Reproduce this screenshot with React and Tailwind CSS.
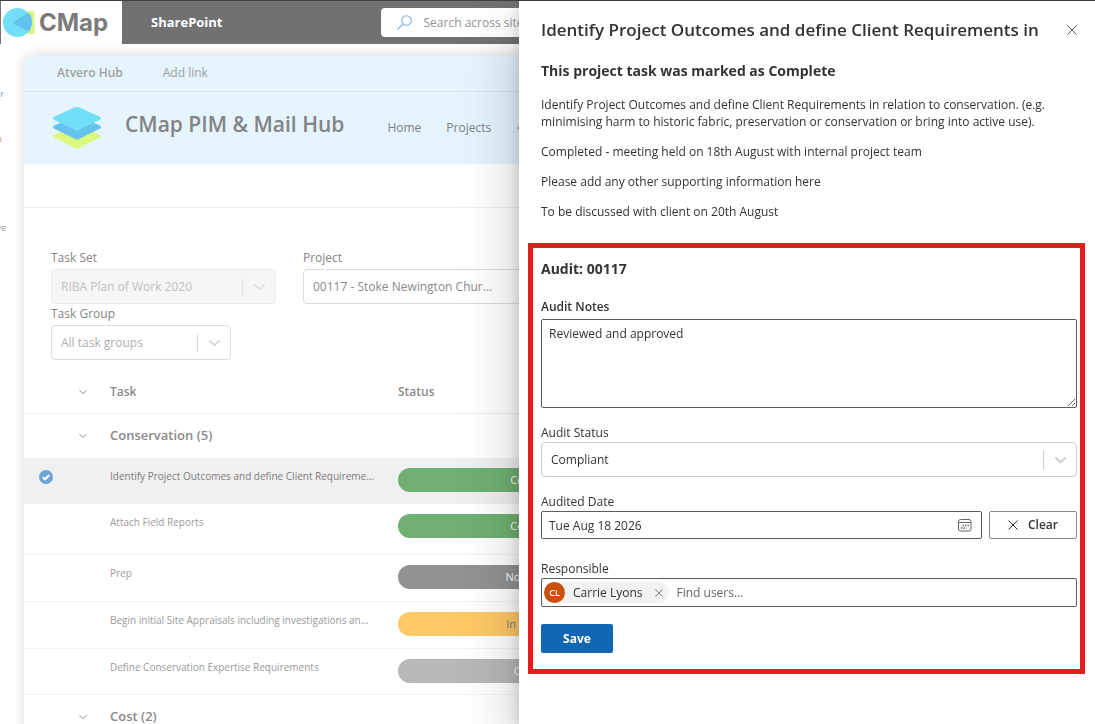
import React from 'react';
import clsx from 'clsx';

const taskRows = [
  { name: 'Identify Project Outcomes and define Client Requireme...', status: 'Complete', pill: 'bg-[#70b072] text-white', height: 'h-[46px]', selected: true },
  { name: 'Attach Field Reports', status: 'Complete', pill: 'bg-[#70b072] text-white', height: 'h-[50px]' },
  { name: 'Prep', status: 'Not Started', pill: 'bg-[#929292] text-white', height: 'h-[47px]' },
  { name: 'Begin initial Site Appraisals including investigations an...', status: 'In Progress', pill: 'bg-[#ffc966] text-[#7a7a7a]', height: 'h-[47px]' },
  { name: 'Define Conservation Expertise Requirements', status: 'On Hold', pill: 'bg-[#b8b8b8] text-white', height: 'h-[46px]' },
];

const notes = [
  'Identify Project Outcomes and define Client Requirements in relation to conservation. (e.g. minimising harm to historic fabric, preservation or conservation or bring into active use).',
  'Completed - meeting held on 18th August with internal project team',
  'Please add any other supporting information here',
  'To be discussed with client on 20th August',
];

const SmallChevron = () => (
  <svg className="w-2 h-2" viewBox="0 0 8 8" fill="none" stroke="#8c8c8c" strokeWidth="1">
    <path d="M0.5 2.2 4 5.7 7.5 2.2" />
  </svg>
);

const CloseIcon = ({ className }) => (
  <svg className={className} viewBox="0 0 10 10" fill="none" stroke="currentColor" strokeWidth="1">
    <path d="M0.5 0.5 9.5 9.5M9.5 0.5 0.5 9.5" />
  </svg>
);

// Drop-down with the divider and chevron drawn over its right edge
const SelectBox = ({ id, value, className, disabled, arrow = 'text-[#d9d9d9]' }) => (
  <div className={clsx('relative', arrow)}>
    <select
      id={id}
      disabled={disabled}
      className={clsx('block w-full h-[35px] appearance-none rounded border pl-[9px] pr-9 text-[12px] opacity-100', className)}
    >
      <option>{value}</option>
    </select>
    <div className="absolute inset-y-0 right-0 flex items-center pointer-events-none">
      <span className="w-px h-[18px] bg-current" />
      <svg className="w-[33px] h-5" viewBox="0 0 33 20" fill="none" stroke="currentColor" strokeWidth="2" strokeLinecap="round">
        <path d="M12 8 16.500 12.2 21 8" />
      </svg>
    </div>
  </div>
);

const TopBar = () => (
  <header className="flex h-11 border-t border-[#3f3f3f] bg-[#717171]">
    <div className="flex items-center w-[122px] border-l border-[#717171] bg-white pl-0.5">
      <svg className="w-8 h-[30px]" viewBox="0 0 32 30">
        <rect x="24" y="3" width="7.5" height="23" rx="2.5" fill="#d9f57e" />
        <circle cx="14.5" cy="14.5" r="14.5" fill="#72dff6" />
        <path d="M28 7.500Q30 14.500 27.200 21.500Q26 24 23.500 22.700L11.500 16.200Q9.500 14.700 11.500 13.200L23.500 5.800Q26.500 4.500 28 7.500Z" fill="#64c3ee" />
      </svg>
      <span className="ml-1 text-[24px] leading-6 font-bold text-[#7b7b7b] font-['Inter',sans-serif]">CMap</span>
    </div>
    <a href="#" className="flex items-center ml-[29px] text-[13px] font-bold text-white">SharePoint</a>
    <div className="flex items-center gap-3 ml-[158px] my-[7px] w-[460px] rounded bg-white px-4">
      <svg className="w-[15px] h-[15px] shrink-0" viewBox="0 0 15 15" fill="none" stroke="#7fb2e0" strokeWidth="1.100">
        <circle cx="9.500" cy="5.500" r="4.800" />
        <path d="M6 9 0.500 14.500" />
      </svg>
      <input aria-label="Search" placeholder="Search across sites" className="w-full text-[12px] outline-none placeholder:text-[#959595]" />
    </div>
  </header>
);

const HubHeader = () => (
  <div className="bg-[#e5f4fe]">
    <nav className="flex items-center gap-10 h-[37px] border-b border-[#dae5ee] pl-[33px] text-[12px] text-[#a0a0a0]">
      <a href="#" className="font-semibold">Atvero Hub</a>
      <a href="#">Add link</a>
    </nav>
    <div className="flex items-center h-[72px] pl-[29px]">
      <svg className="w-12 h-[44px]" viewBox="0 0 48 44">
        <path d="M1 28.500 22 20Q24 19.200 26 20L47 28.500Q49 30 47 31.500L26 42Q24 43 22 42L1 31.500Q-1 30 1 28.500Z" fill="#dcf87f" />
        <path d="M1 19.500 22 11Q24 10.200 26 11L47 19.500Q49 21 47 22.500L26 33Q24 34 22 33L1 22.500Q-1 21 1 19.500Z" fill="#66c3ee" />
        <path d="M1 10.800 22 1.300Q24 0.500 26 1.300L47 10.800Q49 12.200 47 13.700L26 24Q24 25 22 24L1 13.700Q-1 12.200 1 10.800Z" fill="#72dff7" />
      </svg>
      <h1 className="ml-6 pb-1.5 text-[21px] font-semibold text-[#848484]">CMap PIM &amp; Mail Hub</h1>
      <nav className="flex items-center gap-[25px] ml-[43px] text-[12px] text-[#808080]">
        <a href="#">Home</a>
        <a href="#">Projects</a>
        <svg className="w-1.5 h-1.5" viewBox="0 0 6 6" fill="none" stroke="currentColor">
          <path d="M5 0.500 1.500 3 5 5.500" />
        </svg>
      </nav>
    </div>
  </div>
);

const Filters = () => (
  <div className="grid grid-cols-[225px_270px] gap-x-[27px] pl-[27px] pt-10 text-[12px] text-[#858585]">
    <div>
      <label htmlFor="task-set" className="block mb-px leading-5">Task Set</label>
      <SelectBox id="task-set" value="RIBA Plan of Work 2020" disabled className="border-[#ececec] bg-[#f6f6f6] text-[#c0c0c0]" arrow="text-[#e2e2e2]" />
    </div>
    <div>
      <label htmlFor="project" className="block mb-px leading-5">Project</label>
      <SelectBox id="project" value="00117 - Stoke Newington Chur..." className="border-[#dcdcdc] bg-white text-[#8a8a8a]" />
    </div>
    <div className="w-[180px]">
      <label htmlFor="task-group" className="block mb-px leading-5">Task Group</label>
      <SelectBox id="task-group" value="All task groups" className="border-[#dcdcdc] bg-white text-[#b0b0b0]" />
    </div>
  </div>
);

const GroupRow = ({ title }) => (
  <tr className="h-[45px]">
    <td />
    <td><SmallChevron /></td>
    <th colSpan={3} scope="rowgroup" className="text-left text-[13px] font-semibold text-[#8a8a8a]">{title}</th>
  </tr>
);

const TaskTable = () => (
  <table className="w-full table-fixed mt-3 text-[#8a8a8a]">
    <colgroup>
      <col className="w-[55px]" />
      <col className="w-[31px]" />
      <col className="w-[288px]" />
      <col className="w-[274px]" />
      <col />
    </colgroup>
    <thead>
      <tr className="h-[41px] border-b border-[#eeeeee] text-left text-[12px]">
        <td />
        <td><SmallChevron /></td>
        <th scope="col" className="font-semibold">Task</th>
        <th scope="col" className="font-semibold">Status</th>
        <td />
      </tr>
    </thead>
    <tbody>
      <GroupRow title="Conservation (5)" />
      {taskRows.map((row) => (
        <tr key={row.name} className={clsx('align-top', row.height, row.selected ? 'bg-[#f0f0f0] text-[#7c7c7c]' : 'border-b border-[#f5f5f5] text-[#9a9a9a]')}>
          <td className="pt-3 pl-[15px]">
            {row.selected && (
              <svg className="w-3.5 h-3.5" viewBox="0 0 14 14">
                <circle cx="7" cy="7" r="7" fill="#6da3d6" />
                <path d="M3.800 7.200 6.100 9.300 10.300 5" fill="none" stroke="#fff" strokeWidth="2" />
              </svg>
            )}
          </td>
          <td />
          <td className="pt-2.5 text-[10px] leading-4 whitespace-nowrap">{row.name}</td>
          <td className="pt-2.5">
            <div className={clsx('h-6 rounded-full text-center text-[11px] leading-6', row.pill)}>{row.status}</div>
          </td>
          <td />
        </tr>
      ))}
      <GroupRow title="Cost (2)" />
    </tbody>
  </table>
);

const AuditForm = () => (
  <form className="ml-[9px] mr-2.5 mt-[23px] border-[5px] border-[#e81c1c] pl-2 pr-[3px] pt-[9px] pb-4 text-[12px] text-[#333333]">
    <h3 className="text-[14px] leading-6 font-bold">Audit: 00117</h3>

    <label htmlFor="notes" className="block mt-4 mb-0.5 leading-5 font-semibold">Audit Notes</label>
    <textarea id="notes" defaultValue="Reviewed and approved" className="block w-full h-[89px] rounded-xs border border-[#5c5c5c] px-[7px] py-1 leading-5" />

    <label htmlFor="status" className="block mt-4 leading-[18px]">Audit Status</label>
    <SelectBox id="status" value="Compliant" className="border-[#cccccc] bg-white text-[#333333]" arrow="text-[#cccccc]" />

    <label htmlFor="date" className="block mt-4 leading-[18px]">Audited Date</label>
    <div className="flex gap-[7px]">
      <div className="relative flex-1">
        <input id="date" defaultValue="Tue Aug 18 2026" className="block w-full h-7 rounded-xs border border-[#5c5c5c] px-[7px]" />
        <svg className="absolute right-2.5 top-[7px] w-[14px] h-[14px]" viewBox="0 0 14 14" fill="none" stroke="#666666">
          <rect x="0.500" y="1.500" width="12.500" height="11.500" rx="2" />
          <path d="M1 4.500H13" />
          <path d="M4.500 7.500H11M3 10H8.500" strokeWidth="1.500" strokeDasharray="1.500 1" />
        </svg>
      </div>
      <button type="button" className="flex items-center justify-center gap-2.5 w-[88px] h-7 rounded-xs border border-[#8a8a8a] font-semibold">
        <CloseIcon className="w-2.5 h-2.5" />
        Clear
      </button>
    </div>

    <label htmlFor="responsible" className="block mt-[21px] leading-[18px]">Responsible</label>
    <div className="flex items-center h-[29px] rounded-xs border border-[#5c5c5c] pl-0.5">
      <div className="flex items-center rounded-full bg-[#f3f2f1] pr-1.5">
        <span className="flex items-center justify-center w-[21px] h-[21px] rounded-full bg-[#ca5010] text-[9px] leading-3 font-semibold text-white">CL</span>
        <span className="ml-2">Carrie Lyons</span>
        <button type="button" aria-label="Remove Carrie Lyons" className="ml-3 text-[#605e5c]">
          <CloseIcon className="block w-2 h-2" />
        </button>
      </div>
      <input id="responsible" placeholder="Find users..." className="flex-1 ml-2 outline-none placeholder:text-[#666666]" />
    </div>

    <button type="button" className="block mt-[17px] w-[72px] h-[29px] rounded-xs bg-[#1267b4] font-bold text-white">Save</button>
  </form>
);

const TaskPanel = () => (
  <aside className="fixed right-0 top-px bottom-0 w-[576px] bg-white text-[#333333] shadow-[0_26px_58px_rgba(0,0,0,0.22),0_5px_14px_rgba(0,0,0,0.18)]">
    <div className="flex items-center justify-between pl-[22px] pr-[18px] pt-4">
      <h2 className="text-[17px] leading-[26px] font-semibold">Identify Project Outcomes and define Client Requirements in</h2>
      <button type="button" aria-label="Close" className="text-[#555555]">
        <CloseIcon className="block w-2.5 h-2.5" />
      </button>
    </div>
    <div className="pl-[22px] pr-[18px] pt-[18px]">
      <h3 className="text-[14px] leading-5 font-bold">This project task was marked as Complete</h3>
      <div className="flex flex-col gap-[13px] mt-[15px] text-[12px] leading-[17px]">
        {notes.map((note) => <p key={note}>{note}</p>)}
      </div>
    </div>
    <AuditForm />
  </aside>
);

const App = () => (
  <div className="h-screen overflow-hidden bg-white font-['Open_Sans',sans-serif]">
    <TopBar />
    <div className="flex pt-[11px]">
      {/* Tail end of the collapsed side menu */}
      <nav className="w-6 shrink-0 pt-[33px] text-[9px] leading-3 text-[#7f9fbe]">
        <a href="#" className="flex justify-end w-1 overflow-hidden">er</a>
        <a href="#" className="flex justify-end w-0.5 mt-[33px] overflow-hidden text-[#c98f6f]">n</a>
        <a href="#" className="flex justify-end w-1.5 mt-[77px] overflow-hidden text-[#9a9a9a]">ve</a>
      </nav>
      <main className="flex-1 min-w-0 rounded-tl-xl overflow-hidden bg-white shadow-[0_0_12px_rgba(0,0,0,0.16)]">
        <HubHeader />
        <div className="h-11 border-b border-[#eeeeee]" />
        <Filters />
        <TaskTable />
      </main>
    </div>
    <TaskPanel />
  </div>
);

export default App;
